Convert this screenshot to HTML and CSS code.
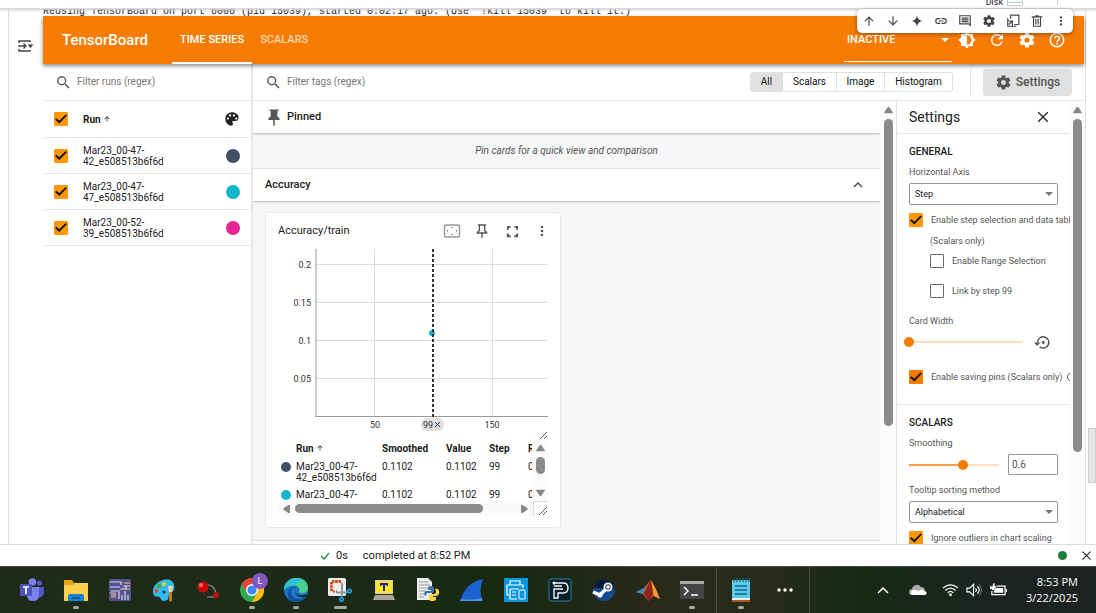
FILE: index.html
```html
<!DOCTYPE html>
<html lang="en">
<head>
<meta charset="utf-8">
<meta name="viewport" content="width=device-width, initial-scale=1">
<title>TensorBoard</title>
<link rel="stylesheet" href="styles.css">
</head>
<body>
<svg class="defs" aria-hidden="true">
  <symbol id="i-search" viewBox="0 0 24 24"><path d="M15.5 14h-.8l-.3-.3A6.5 6.5 0 1 0 13.700 14.400l.3.3v.8l5 5 1.500-1.500zm-6 0a4.500 4.500 0 1 1 0-9 4.500 4.500 0 0 1 0 9z"/></symbol>
  <symbol id="i-gear" viewBox="0 0 24 24"><path d="M19.430 12.980c.04-.32.07-.64.07-.98s-.03-.66-.07-.98l2.110-1.650c.19-.15.24-.42.12-.64l-2-3.460c-.12-.22-.39-.3-.61-.22l-2.490 1c-.52-.4-1.080-.73-1.690-.98l-.38-2.650A.49.49 0 0 0 14 2h-4c-.25 0-.46.18-.49.42l-.38 2.650c-.61.25-1.170.59-1.690.98l-2.490-1c-.23-.09-.49 0-.61.22l-2 3.460c-.13.22-.07.49.12.64l2.110 1.650c-.04.32-.07.65-.07.98s.03.66.07.98l-2.110 1.650c-.19.15-.24.42-.12.64l2 3.460c.12.22.39.3.61.22l2.490-1c.52.4 1.080.73 1.690.98l.38 2.650c.03.24.24.42.49.42h4c.25 0 .46-.18.49-.42l.38-2.650c.61-.25 1.170-.59 1.690-.98l2.490 1c.23.09.49 0 .61-.22l2-3.460c.12-.22.07-.49-.12-.64l-2.110-1.650zM12 15.500a3.500 3.500 0 1 1 0-7 3.500 3.500 0 0 1 0 7z"/></symbol>
  <symbol id="i-more" viewBox="0 0 24 24"><path d="M12 8a2 2 0 1 0 0-4 2 2 0 0 0 0 4zm0 2a2 2 0 1 0 0 4 2 2 0 0 0 0-4zm0 6a2 2 0 1 0 0 4 2 2 0 0 0 0-4z"/></symbol>
  <symbol id="i-sort" viewBox="0 0 24 24"><path d="M4 12l1.400 1.400L11 7.800V20h2V7.800l5.600 5.600L20 12l-8-8z"/></symbol>
  <symbol id="i-close" viewBox="0 0 24 24"><path d="M19 6.200L17.800 5 12 10.800 6.200 5 5 6.200l5.800 5.800L5 17.800 6.200 19l5.800-5.800 5.800 5.800 1.200-1.200-5.800-5.800z"/></symbol>
  <symbol id="i-drop" viewBox="0 0 10 5"><path d="M0 0h10L5 5z"/></symbol>
  <symbol id="i-up" viewBox="0 0 10 8"><path d="M4 1Q5 0 6 1L10 7Q10 8 9 8H1Q0 8 0 7z"/></symbol>
  <symbol id="i-grip" viewBox="0 0 8 8"><path d="M0 8L8 0M4 8L8 4" fill="none" stroke="#555"/></symbol>
</svg>

<header class="topstrip"><span class="disk">Disk</span><span class="diskbar"></span><span class="topsep"></span></header>

<div class="notebook">
  <div class="gutter">
    <svg width="18" height="14" viewBox="0 0 18 14" fill="none" stroke="#444" stroke-width="1.400"><path d="M2 4V2h11v1M2 10v2h11v-1M1 7h8M6.500 4.500L9 7 6.500 9.500"/><path d="M10.500 5.500h6l-3 3.500z" fill="#444" stroke="none"/></svg>
  </div>
  <div class="output">
    <pre class="log">Reusing TensorBoard on port 6006 (pid 15039), started 0:02:17 ago. (Use '!kill 15039' to kill it.)</pre>

    <div class="celltools">
      <button aria-label="Move up"><svg viewBox="0 0 24 24"><use href="#i-sort"/></svg></button>
      <button aria-label="Move down"><svg viewBox="0 0 24 24"><path d="M20 12l-1.400-1.400L13 16.200V4h-2v12.200l-5.600-5.600L4 12l8 8z"/></svg></button>
      <button aria-label="Assist"><svg viewBox="0 0 24 24"><path d="M12 2q1 9 10 10-9 1-10 10-1-9-10-10 9-1 10-10z"/></svg></button>
      <button aria-label="Copy link"><svg viewBox="0 0 24 24"><path d="M11 17H7A5 5 0 0 1 7 7h4v2H7a3 3 0 0 0 0 6h4zM8 11h8v2H8zM13 7h4a5 5 0 0 1 0 10h-4v-2h4a3 3 0 0 0 0-6h-4z"/></svg></button>
      <button aria-label="Comment"><svg viewBox="0 0 24 24"><path fill-rule="evenodd" d="M2 2h20v20l-4-4H2zM4 4v12h15l1 1V4zM6 6h12v2H6zm0 3h12v2H6zm0 3h12v2H6z"/></svg></button>
      <button aria-label="Cell settings"><svg viewBox="0 0 24 24"><use href="#i-gear"/></svg></button>
      <button aria-label="Mirror cell"><svg viewBox="0 0 24 24" fill="none" stroke="#444" stroke-width="2"><path d="M8 8V2h14v16h-8M3 7v14h15M3 12h8v8M11 12l-6 6"/></svg></button>
      <button aria-label="Delete"><svg viewBox="0 0 24 24" fill="none" stroke="#444" stroke-width="2"><path d="M6 5v16h12V5M3 5h18M9 3h6M10 8v10M14 8v10"/></svg></button>
      <button aria-label="More"><svg viewBox="0 0 24 24"><use href="#i-more"/></svg></button>
    </div>

    <div class="appbar">
      <h1>TensorBoard</h1>
      <nav><a class="active" href="#time">TIME SERIES</a><a href="#scalars">SCALARS</a></nav>
      <div class="inactive"><label class="pick"><select aria-label="Plugins"><option>INACTIVE</option></select><svg class="caret" viewBox="0 0 10 5"><use href="#i-drop"/></svg></label></div>
      <div class="appicons">
        <button aria-label="Theme"><svg viewBox="0 0 24 24"><path fill-rule="evenodd" d="M20 15.300L23.300 12 20 8.700V4h-4.700L12 .7 8.700 4H4v4.700L.7 12 4 15.300V20h4.700l3.300 3.300 3.300-3.300H20zM12 18V6a6 6 0 0 1 0 12z"/></svg></button>
        <button aria-label="Reload"><svg viewBox="0 0 24 24"><path d="M17.650 6.350A8 8 0 1 0 19.730 14h-2.080A6 6 0 1 1 12 6c1.660 0 3.140.69 4.220 1.780L13 11h7V4z"/></svg></button>
        <button aria-label="Preferences"><svg viewBox="0 0 24 24"><use href="#i-gear"/></svg></button>
        <button aria-label="Help"><svg viewBox="0 0 24 24"><path fill-rule="evenodd" d="M11 18h2v-2h-2zM12 2a10 10 0 1 0 0 20 10 10 0 0 0 0-20zm0 18a8 8 0 1 1 0-16 8 8 0 0 1 0 16zM12 6a4 4 0 0 0-4 4h2a2 2 0 1 1 4 0c0 2-3 1.750-3 5h2c0-2.250 3-2.500 3-5a4 4 0 0 0-4-4z"/></svg></button>
      </div>
    </div>

    <div class="board">
      <aside class="runs">
        <label class="filter"><svg viewBox="0 0 24 24"><use href="#i-search"/></svg><input type="text" placeholder="Filter runs (regex)"></label>
        <div class="run head"><input type="checkbox" class="check" checked aria-label="All runs"><b>Run <svg class="sort" viewBox="0 0 24 24"><use href="#i-sort"/></svg></b>
          <svg class="palette" viewBox="0 0 24 24"><path fill-rule="evenodd" d="M12 2C6 2 2 6.500 2 12s4.500 10 9 10c1.500 0 2.500-1 2.500-2.500 0-1.300-1-1.500-1-2.700 0-1 .8-1.800 2-1.800H17c3 0 5-2 5-5 0-4.500-4.500-8-10-8zM6 13a1.700 1.700 0 1 1 0-3.400A1.700 1.700 0 0 1 6 13zm3-4.500A1.700 1.700 0 1 1 9 5a1.700 1.700 0 0 1 0 3.500zm6 0A1.700 1.700 0 1 1 15 5a1.700 1.700 0 0 1 0 3.500zm3.500 4.500a1.700 1.700 0 1 1 0-3.400 1.700 1.700 0 0 1 0 3.400z"/></svg></div>
        <div class="run"><input type="checkbox" class="check" id="r1" checked><label for="r1">Mar23_00-47-<br>42_e508513b6f6d</label><i class="dot navy"></i></div>
        <div class="run"><input type="checkbox" class="check" id="r2" checked><label for="r2">Mar23_00-47-<br>47_e508513b6f6d</label><i class="dot teal"></i></div>
        <div class="run"><input type="checkbox" class="check" id="r3" checked><label for="r3">Mar23_00-52-<br>39_e508513b6f6d</label><i class="dot pink"></i></div>
      </aside>

      <section class="main">
        <div class="toolbar">
          <label class="filter"><svg viewBox="0 0 24 24"><use href="#i-search"/></svg><input type="text" placeholder="Filter tags (regex)"></label>
          <div class="toggles"><button class="on">All</button><button>Scalars</button><button>Image</button><button>Histogram</button></div>
          <div class="setwrap"><button class="setbtn"><svg viewBox="0 0 24 24"><use href="#i-gear"/></svg>Settings</button></div>
        </div>
        <div class="split">
          <div class="cards">
            <div class="grouphead"><svg class="pin" viewBox="0 0 24 24"><path d="M6 2h12v2h-1.500v7l3 3v2H13v7l-1 1-1-1v-7H4.500v-2l3-3V4H6z"/></svg><h2>Pinned</h2></div>
            <p class="pinhint">Pin cards for a quick view and comparison</p>
            <div class="grouphead acc"><h2>Accuracy</h2><button aria-label="Collapse"><svg viewBox="0 0 12 8"><path d="M2 6l4-4 4 4" fill="none" stroke="#444" stroke-width="1.300"/></svg></button></div>
            <div class="groupbody">
              <article class="card">
                <div class="cardhead"><h3>Accuracy/train</h3>
                  <button aria-label="Fit domain"><svg class="i18" viewBox="0 0 18 16" fill="none" stroke="#999"><rect x="1.500" y="2" width="15" height="12" rx="1" stroke-width="1.500"/><path d="M8 4.500h2M8 11.500h2M4.500 7v2M13.500 7v2"/></svg></button>
                  <button aria-label="Pin card"><svg class="i18" viewBox="0 0 24 24"><path fill-rule="evenodd" d="M6 2h12v2h-1v7l3 3v2h-7v6l-1 1-1-1v-6H4v-2l3-3V4H6zM9 4v8l-2 2h10l-2-2V4z"/></svg></button>
                  <button aria-label="Full size"><svg viewBox="0 0 24 24"><path d="M3 3h6v3H6v3H3zM15 3h6v6h-3V6h-3zM3 15h3v3h3v3H3zM18 15h3v6h-6v-3h3z"/></svg></button>
                  <button aria-label="More options"><svg class="i18" viewBox="0 0 24 24"><use href="#i-more"/></svg></button>
                </div>
                <svg class="chart" viewBox="0 0 270 191" role="img" aria-label="Accuracy/train chart">
                  <g fill="none" stroke="#dcdcdc" stroke-width="1"><path d="M38 15.500H270M38 53.500H270M38 91.500H270M38 129.500H270M96.500 0V167M214.500 0V167"/></g>
                  <path d="M38 0V168M37 167.500H270" stroke="#9a9a9a" fill="none" stroke-width="1"/>
                  <circle cx="154" cy="84" r="3" fill="#12b5cb"/>
                  <path d="M155 0V168" stroke="#333" stroke-width="2" stroke-dasharray="3 2" fill="none"/>
                  <g class="ylab"><text x="33" y="19">0.2</text><text x="33" y="57">0.15</text><text x="33" y="95">0.1</text><text x="33" y="133">0.05</text></g>
                  <rect x="143" y="169" width="23" height="13" rx="6" fill="#e0e0e0"/>
                  <g class="xlab"><text x="97" y="179">50</text><text x="150" y="179">99</text><text x="214" y="179">150</text></g>
                  <path d="M157 173l5 5M162 173l-5 5" stroke="#333" fill="none"/>
                  <path d="M262 190L269 183M266 190L269 187" stroke="#555" fill="none"/>
                </svg>
                <div class="datatable">
                  <div class="datarow">
                    <div class="tablewrap">
                      <table>
                        <thead><tr><th></th><th>Run <svg class="sort" viewBox="0 0 24 24"><use href="#i-sort"/></svg></th><th>Smoothed</th><th>Value</th><th>Step</th><th>Relative</th></tr></thead>
                        <tbody>
                          <tr><td><i class="dot navy"></i></td><td>Mar23_00-47-<br>42_e508513b6f6d</td><td>0.1102</td><td>0.1102</td><td>99</td><td>0</td></tr>
                          <tr><td><i class="dot teal"></i></td><td>Mar23_00-47-</td><td>0.1102</td><td>0.1102</td><td>99</td><td>0</td></tr>
                        </tbody>
                      </table>
                    </div>
                    <div class="vbar small"><svg viewBox="0 0 10 8"><use href="#i-up"/></svg><i></i><svg class="flip" viewBox="0 0 10 8"><use href="#i-up"/></svg></div>
                  </div>
                  <div class="hbar"><svg class="left" viewBox="0 0 10 8"><use href="#i-up"/></svg><span><i></i></span><svg class="right" viewBox="0 0 10 8"><use href="#i-up"/></svg><b><svg viewBox="0 0 8 8"><use href="#i-grip"/></svg></b></div>
                </div>
              </article>
            </div>
            <div class="nextgroup"></div>
          </div>
          <div class="vbar a"><svg viewBox="0 0 10 8"><use href="#i-up"/></svg><i></i></div>
          <aside class="settings">
            <div class="sethead"><h2>Settings</h2><button aria-label="Close settings"><svg viewBox="0 0 24 24"><use href="#i-close"/></svg></button></div>
            <div class="sec">
              <h3>GENERAL</h3>
              <label class="cap" for="axis">Horizontal Axis</label>
              <div class="pick box"><select id="axis"><option>Step</option></select><svg class="caret" viewBox="0 0 10 5"><use href="#i-drop"/></svg></div>
              <label class="opt first"><input type="checkbox" class="check" checked><span>Enable step selection and data table</span></label>
              <p class="sub">(Scalars only)</p>
              <label class="opt in range"><input type="checkbox" class="check"><span>Enable Range Selection</span></label>
              <label class="opt in link"><input type="checkbox" class="check"><span>Link by step 99</span></label>
              <label class="cap" for="cw">Card Width</label>
              <div class="sliderrow"><input id="cw" class="wide" type="range" min="0" max="100" value="0"><button aria-label="Reset card width"><svg viewBox="0 0 24 24"><path d="M5 12a8 8 0 1 1 3 6.200" fill="none" stroke="#555" stroke-width="2"/><path d="M0 12h9l-4.500 5z"/><circle cx="13" cy="12" r="2"/></svg></button></div>
              <label class="opt pins"><input type="checkbox" class="check deep" checked><span>Enable saving pins (Scalars only)</span><svg class="info" viewBox="0 0 24 24"><circle cx="12" cy="12" r="9" fill="none" stroke="#555" stroke-width="2"/><path d="M11 10h2v7h-2zM11 7h2v2h-2z"/></svg></label>
            </div>
            <div class="sec second">
              <h3>SCALARS</h3>
              <label class="cap" for="sm">Smoothing</label>
              <div class="smooth"><input id="sm" class="fill" type="range" min="0" max="1" step="0.1" value="0.6"><input type="text" value="0.6" aria-label="Smoothing value"></div>
              <label class="cap" for="tt">Tooltip sorting method</label>
              <div class="pick box"><select id="tt"><option>Alphabetical</option></select><svg class="caret" viewBox="0 0 10 5"><use href="#i-drop"/></svg></div>
              <label class="opt last"><input type="checkbox" class="check" checked><span>Ignore outliers in chart scaling</span></label>
            </div>
          </aside>
          <div class="vbar b"><svg viewBox="0 0 10 8"><use href="#i-up"/></svg><i></i></div>
        </div>
      </section>
    </div>
  </div>
  <div class="pagebar"><i></i></div>
</div>

<footer class="status">
  <svg class="ok" viewBox="0 0 10 8"><path d="M1 4l3 3 5-6" fill="none" stroke="#1e8e3e" stroke-width="1.200"/></svg><span>0s</span><span class="done">completed at 8:52 PM</span><i class="live"></i><button aria-label="Dismiss"><svg viewBox="0 0 24 24"><use href="#i-close"/></svg></button>
</footer>

<div class="taskbar">
  <div class="apps">
    <button aria-label="Teams"><svg viewBox="0 0 24 24"><circle cx="19.500" cy="5" r="2.600" fill="#5059c9"/><path d="M16 9h8v6q-1 5-6 4z" fill="#5059c9"/><circle cx="12.500" cy="4" r="3.800" fill="#7b83eb"/><path d="M7 9h12v8q0 6-6 6t-6-6z" fill="#7b83eb"/><rect x="0" y="6" width="12" height="12" rx="1" fill="#4b53bc"/><path d="M3 9h6M6 9v7" stroke="#fff" stroke-width="1.700" fill="none"/></svg></button>
    <button class="open" aria-label="File Explorer"><svg viewBox="0 0 24 24"><path d="M0 3q0-1 1-1h7l2 3h13q1 0 1 1v16q0 1-1 1H1q-1 0-1-1z" fill="#e8a317"/><path d="M0 7h9l2-2h12q1 0 1 1v16q0 1-1 1H1q-1 0-1-1z" fill="#ffd04e"/><path d="M4 23v-5q0-2 2-2h12q2 0 2 2v5z" fill="#1683cf"/><path d="M8 19h8v2H8z" fill="#0a5ca0"/></svg></button>
    <button aria-label="Control board"><svg viewBox="0 0 24 24"><rect x="1" y="1" width="22" height="22" rx="2" fill="#55528f"/><path d="M2 4h11v3M2 9h10M15 8h7M3 13h9M3 17h5M11 14v7M14 17v5M17 13v9M20 17v5M12 11h6V8" stroke="#ddd6ef" stroke-width="1.200" fill="none"/><path d="M16 5h6M16 11h6M2 15h6M3 19h5" stroke="#edbd83" stroke-width="1.200"/></svg></button>
    <button aria-label="Paint"><svg viewBox="0 0 24 24"><path d="M11 2c7-3 13 3 11 9-1 4-4 3-5 5-1 3 1 7-6 7-2 0-2-3-4-4s-6 1-6-6C1 8 5 4 11 2z" fill="#31bced"/><circle cx="12" cy="6" r="2" fill="#f5cf33"/><circle cx="7" cy="8" r="2.200" fill="#49a638"/><circle cx="4.500" cy="13" r="2" fill="#e65025"/><circle cx="12" cy="14" r="1.600" fill="#11455c"/><path d="M16 8h5l-1 6h-3z" fill="#ead4ac"/><path d="M17 14h3v9q-2 1-3 0z" fill="#c67824"/></svg></button>
    <button aria-label="Molecules"><svg viewBox="0 0 24 24"><path d="M8 7q10-2 12 9M11 19h8" fill="none" stroke="#777" stroke-width="1.600"/><circle cx="7" cy="9" r="5.500" fill="#ca0b0b"/><circle cx="5" cy="7" r="2" fill="#ff6b62"/><circle cx="20" cy="17" r="3" fill="#bb1212"/></svg></button>
    <button class="open" aria-label="Chrome"><svg viewBox="0 0 24 24"><circle cx="12" cy="12" r="12" fill="#34a853"/><path d="M12 6h10.400A12 12 0 0 1 12 24l5-9z" fill="#fbbc05"/><path d="M1.600 6A12 12 0 0 1 22.400 6H12l-5 8z" fill="#ea4335"/><circle cx="12" cy="12" r="6" fill="#fff"/><circle cx="12" cy="12" r="4.600" fill="#4285f4"/></svg><em>L</em></button>
    <button class="open" aria-label="Edge"><svg viewBox="0 0 24 24"><circle cx="12" cy="12" r="12" fill="#1679c8"/><path d="M0 12C0-4 24-4 24 10c0 6-8 6-9 4 3-6-8-10-15-2z" fill="#48cf91"/><path d="M0 12C0 3 10-2 17 1c-1 3-5 4-6 6-5-1-9 1-11 5z" fill="#2bbfe0"/><path d="M8 11c-4 5 2 14 14 8-3 4-7 5-10 5C6 24 3 19 4 15c0-4 6-7 9-5-3 0-5 1-5 1z" fill="#114f9c"/><path d="M13 10c-4 4 1 10 10 6l-1 3c-9 2-13-5-9-9z" fill="#1c2a19"/></svg></button>
    <button class="open wide" aria-label="Snipping Tool"><svg viewBox="0 0 24 24"><rect x="0" y="0" width="18" height="18" rx="1.500" fill="#eee"/><path d="M3.500 13V3.500H13" fill="none" stroke="#dc4215" stroke-width="2.800" stroke-dasharray="2.500 .8"/><path d="M5 13.500h4" stroke="#dc4215" stroke-width="2" stroke-dasharray="2 1"/><path d="M14 5v12M8 14.500h11" stroke="#8e979c" stroke-width="2"/><path d="M18 14.500l2-1M14 17l-.5 3" stroke="#24a5e5" stroke-width="1.500"/><circle cx="21.500" cy="13" r="1.800" fill="none" stroke="#24a5e5" stroke-width="1.500"/><circle cx="13.500" cy="21.500" r="1.800" fill="none" stroke="#24a5e5" stroke-width="1.500"/></svg></button>
    <button aria-label="Terminal T"><svg viewBox="0 0 24 24"><path d="M3 2h18v14H3z" fill="#ccc"/><path d="M4 3h16v12H4z" fill="#ffe51c"/><path d="M8 5h8v3h-1l-1-1h-1v6h-2V7h-1L9 8H8z" fill="#1822b8"/><path d="M3 17h18l2 5H1z" fill="#aaa69b"/></svg></button>
    <button aria-label="Python"><svg viewBox="0 0 24 24"><path d="M1 0h11l4 4v18H1z" fill="#eee"/><path d="M3 4h10M3 7h11M3 10h9M3 13h7M3 16h5M3 19h5" stroke="#999"/><path d="M12 12v-2q0-2 3-2t3 2v3q0 2-2 2h-4q-2 0-2 3H9q-2-4 1-5h5v-1z" fill="#3974a8"/><path d="M19 11q5-1 4 5-1 2-3 2h-3v1h3v2q0 2-4 2-3 0-3-2v-3q0-2 2-2h3q2 0 2-3z" fill="#ffd348"/></svg></button>
    <button aria-label="Wireshark"><svg viewBox="0 0 24 24"><path d="M0 23Q6 4 23 1q-5 12 0 22z" fill="#1b62cf"/><path d="M2 21q9 2 20-1v3H0z" fill="#4e97ee"/></svg></button>
    <button aria-label="Printer"><svg viewBox="0 0 24 24"><path d="M0 0h24v24H0z" fill="#0796df"/><path d="M6 7V3h10v4M6 17H3V7h16v3M6 11h9M6 11v10h7M8 14h4M8 17h4" fill="none" stroke="#fff" stroke-width="1.200"/><rect x="15" y="12" width="6" height="9" rx="1" fill="#0796df" stroke="#fff"/></svg></button>
    <button aria-label="Packet Tracer"><svg viewBox="0 0 24 24"><rect x="1" y="1" width="22" height="22" rx="2" fill="#091d28" stroke="#1889b5"/><path d="M6 5h9q5 0 5 5t-5 5H10v5H6v-9h9M6 8h8" fill="none" stroke="#eef7fa" stroke-width="1.400"/><circle cx="6" cy="5" r="1.500" fill="#fff"/></svg></button>
    <button aria-label="Steam"><svg viewBox="0 0 24 24"><circle cx="12" cy="12" r="11" fill="#144c8d"/><path d="M1 10Q4 0 14 1q8 2 9 10z" fill="#0b1b36"/><path d="M1 14l7 3 8-8" stroke="#fff" stroke-width="3.500" fill="none"/><circle cx="16" cy="9" r="4.500" fill="#fff"/><circle cx="16" cy="9" r="2.700" fill="#173b67"/><circle cx="16" cy="9" r="1.800" fill="#fff"/><circle cx="8" cy="17" r="2.500" fill="#fff"/></svg></button>
    <button aria-label="MATLAB"><svg viewBox="0 0 24 24"><path d="M0 14l8-4 7-8q3 5 9 19l-6-3-6 5-5-7z" fill="#d15b24"/><path d="M0 14l8-4 3-4-4 10z" fill="#348fbc"/><path d="M15 2q3 8 1 17l-4 4-4-8z" fill="#8f251b"/><path d="M15 2q5 8 9 19l-6-3z" fill="#f29a32"/></svg></button>
    <button class="open" aria-label="Command prompt"><svg viewBox="0 0 24 24"><path d="M0 3h24v18H0z" fill="#454545"/><path d="M0 3h24v3H0z" fill="#aaa"/><path d="M4 9l4 4-4 4M11 17h7" fill="none" stroke="#fff" stroke-width="1.500"/></svg></button>
  </div>
  <div class="apps extra">
    <button class="open" aria-label="Notepad"><svg viewBox="0 0 24 24"><path d="M3 2h18v20H3z" fill="#5bc8ea"/><path d="M5 0v4M8 0v4M11 0v4M14 0v4M17 0v4M20 0v4" stroke="#146383" stroke-width="1.200"/><path d="M6 8h12M6 12h12M6 16h12" stroke="#116a94" stroke-width="1.700"/><path d="M3 20h18v2H3z" fill="#eee"/><path d="M3 22h18v2H3z" fill="#a85721"/></svg></button>
    <button aria-label="More apps"><svg viewBox="0 0 24 24"><circle cx="6" cy="12" r="1.700"/><circle cx="12" cy="12" r="1.700"/><circle cx="18" cy="12" r="1.700"/></svg></button>
  </div>
  <div class="tray">
    <svg class="chev" viewBox="0 0 12 8"><path d="M1 7l5-5 5 5" fill="none" stroke="#fff" stroke-width="1.500"/></svg>
    <svg class="cloud" viewBox="0 0 18 12"><path d="M3 11a3 3 0 0 1 0-6 5 5 0 0 1 9-2 4 4 0 0 1 4 4z" fill="#aaa"/><path d="M3 11a3 3 0 0 1 1-5q3-1 5 1 4-3 6 0a2 2 0 0 1 1 4z" fill="#fff"/></svg>
    <svg class="wifi" viewBox="0 0 18 14"><path d="M1 5q8-7 16 0M3.500 7.500q5.500-5 11 0M6 10q3-3 6 0" fill="none" stroke="#fff" stroke-width="1.300"/><circle cx="9" cy="12" r="1.500" fill="#fff"/></svg>
    <svg class="vol" viewBox="0 0 18 14"><path d="M1 5h3l4-4v12L4 9H1zM10 5q2 2 0 4M12 3q4 4 0 8" fill="none" stroke="#fff" stroke-width="1.200"/><path d="M14 1q5 6 0 12" fill="none" stroke="#777"/></svg>
    <svg class="batt" viewBox="0 0 18 14"><path d="M7 3h9v9H2V8" fill="none" stroke="#fff" stroke-width="1.300"/><path d="M6 5h8v5H4V8zM17 6h1v3h-1zM3 0v3H0v3h2v1h2L7 3H5V0z" fill="#fff"/></svg>
    <div class="clock"><time>8:53 PM</time><time>3/22/2025</time></div>
  </div>
</div>
</body>
</html>
```
FILE: styles.css
```css
* { box-sizing: border-box; }
body {
  margin: 0;
  height: 100vh;
  display: flex;
  flex-direction: column;
  overflow: hidden;
  background: #fff;
  color: #212121;
  font: 10px/12px Roboto, sans-serif;
}
h1, h2, h3, p, pre { margin: 0; }
h2, h3 { font-weight: 500; }
button { border: 0; padding: 0; background: none; font: inherit; color: inherit; display: flex; align-items: center; justify-content: center; }
input, select { font: inherit; color: inherit; margin: 0; }
svg { flex: none; }
svg:not([fill]) { fill: currentColor; }
i { display: block; flex: none; }
.defs { display: none; }

/* notebook frame */
.topstrip {
  flex: none;
  height: 9px;
  display: flex;
  justify-content: flex-end;
  align-items: flex-end;
  gap: 4px;
  padding-right: 38px;
  overflow: hidden;
  border-bottom: 1px solid #dadada;
  box-shadow: 0 1px 3px #ccc;
  z-index: 1;
}
.disk { font-size: 9px; line-height: 12px; }
.diskbar { width: 16px; height: 7px; margin-bottom: 2px; border: 1px solid #ccc; border-top: 0; background: linear-gradient(#fff 3px, #a8dab5 3px 4px, #fff 4px); }
.topsep { width: 1px; height: 6px; margin: 0 0 3px 30px; background: #ccc; }
.notebook { flex: 1; min-height: 0; display: flex; }
.gutter { width: 35px; margin-left: 8px; padding: 30px 0 0 8px; border-left: 1px solid #dadce0; }
.output { flex: 1; min-width: 0; display: flex; flex-direction: column; position: relative; }
.log { flex: none; height: 7px; overflow: hidden; font: 10px/6px "Liberation Mono", monospace; }
.pagebar { width: 11px; border-left: 1px solid #e0e0e0; margin-left: 1px; padding-top: 419px; }
.pagebar i { height: 55px; margin-left: 2px; background: #e4e4e4; border: 1px solid #ccc; }
.celltools {
  position: absolute;
  top: 0;
  right: 11px;
  display: flex;
  padding: 0;
  height: 24px;
  border-radius: 5px;
  background: #fff;
  color: #444;
  box-shadow: 0 1px 4px #0006;
  z-index: 2;
}
.celltools button { width: 24px; }
.celltools svg { width: 14px; height: 14px; }

/* app bar */
.appbar { flex: none; height: 48px; display: flex; background: #f57c00; color: #fff; box-shadow: 0 2px 4px #0007; z-index: 1; padding-right: 12px; }
.appbar h1 { width: 129px; padding-left: 19px; font-size: 15px; line-height: 48px; font-weight: 500; }
.appbar nav { display: flex; flex: 1; }
.appbar a { padding: 0 8px; color: #ffffffb3; font-size: 11px; font-weight: 500; line-height: 47px; text-decoration: none; }
.appbar a.active { color: #fff; border-bottom: 2px solid #fff; }
.inactive { width: 108px; border-bottom: 1px solid #fff; margin-bottom: 2px; }
.pick { display: grid; align-items: center; }
.pick > * { grid-area: 1 / 1; }
.pick select { appearance: none; width: 100%; border: 0; background: none; border-radius: 0; padding: 0; }
.caret { width: 8px; height: 4px; justify-self: end; pointer-events: none; margin-right: 3px; }
.inactive select { height: 48px; padding-left: 3px; font-size: 11px; font-weight: 500; }
.appicons { display: flex; }
.appicons button { width: 30px; }
.appicons svg { width: 18px; height: 18px; }

/* runs */
.board { flex: 1; min-height: 0; display: flex; }
.runs { width: 210px; border-right: 2px solid #e6e6e6; }
.filter { display: flex; align-items: center; gap: 3px; height: 37px; padding-left: 12px; color: #555; }
.filter svg { width: 17px; height: 17px; }
.filter input { width: 120px; border: 0; outline: 0; background: none; }
.filter input::placeholder { color: #777; }
.runs .filter { border-bottom: 1px solid #e6e6e6; }
.run { display: flex; align-items: center; height: 36px; padding: 0 11px; border-bottom: 1px solid #e6e6e6; line-height: 11px; }
.run.head { height: 37px; }
.run label, .run b { flex: 1; margin-left: 15px; }
.run b, th { font-weight: 700; }
.sort { width: 8px; height: 8px; }
.palette { width: 16px; height: 16px; }
.dot { width: 14px; height: 14px; border-radius: 50%; }
.navy { background: #425066; }
.teal { background: #12b5cb; }
.pink { background: #e52592; }
.check { appearance: none; flex: none; width: 14px; height: 14px; border: 1px solid #666; border-radius: 1px; display: grid; place-items: center; }
.check:checked { background: #ff9800; border-color: #ff9800; }
.check.deep:checked { background: #f57c00; border-color: #f57c00; }
.check:checked::after { content: ""; width: 12px; height: 10px; background: #111; clip-path: polygon(0 54%, 12% 42%, 36% 68%, 88% 4%, 100% 16%, 36% 96%); }

/* tag toolbar */
.main { flex: 1; min-width: 0; display: flex; flex-direction: column; }
.toolbar { flex: none; display: flex; align-items: center; border-bottom: 1px solid #e6e6e6; height: 37px; padding-right: 12px; }
.toolbar .filter { flex: 1; }
.toggles { display: flex; border: 1px solid #e0e0e0; border-radius: 3px; height: 20px; }
.toggles button { padding: 0 11px; border-right: 1px solid #e0e0e0; color: #111; }
.toggles button:nth-child(2) { width: 54px; }
.toggles button:nth-child(3) { width: 48px; }
.toggles button:last-child { width: 67px; border: 0; }
.toggles .on { width: 32px; background: #e0e0e0; }
.setwrap { margin-left: 17px; padding-left: 12px; border-left: 1px solid #e0e0e0; }
.setbtn { gap: 4px; width: 89px; height: 27px; border-radius: 3px; background: #e0e0e0; color: #555; font-size: 12px; font-weight: 500; }
.setbtn svg { width: 17px; height: 17px; }

/* cards */
.split { flex: 1; min-height: 0; display: flex; }
.cards { flex: 1; min-width: 0; overflow: hidden; background: #f5f6f7; }
.grouphead { display: flex; align-items: center; gap: 4px; height: 32px; padding: 0 12px; background: #fff; box-shadow: 0 1px 2px #0004; }
.grouphead h2 { font-size: 11px; flex: 1; }
.pin { width: 18px; height: 18px; color: #555; }
.pinhint { padding: 12px 0 11px; text-align: center; font-style: italic; color: #555; border-bottom: 1px solid #e6e6e6; }
.grouphead.acc { padding-right: 16px; }
.acc svg { width: 12px; height: 8px; }
.groupbody { padding: 11px 12px 12px; }
.nextgroup { height: 10px; background: #fff; border-top: 1px solid #ddd; }
.card { width: 296px; padding: 7px 12px 11px; background: #fff; border: 1px solid #e8e8e8; border-radius: 3px; }
.cardhead { display: flex; align-items: center; height: 22px; margin-right: -9px; }
.cardhead h3 { flex: 1; font-size: 11px; font-weight: 400; }
.cardhead button { width: 30px; color: #555; }
.cardhead svg { width: 15px; height: 15px; }
.cardhead .i18 { width: 18px; height: 16px; }
.chart { display: block; width: 100%; margin-top: 7px; }
.chart text { font: 9px Roboto, sans-serif; fill: #333; }
.ylab { text-anchor: end; }
.xlab { text-anchor: middle; }
.datarow { display: flex; height: 61px; }
.tablewrap { flex: 1; min-width: 0; overflow: hidden; }
table { width: 320px; table-layout: fixed; border-collapse: collapse; line-height: 11px; }
th, td { padding: 0; text-align: left; vertical-align: top; white-space: nowrap; }
th { height: 21px; padding-top: 3px; }
td { height: 28px; }
th:nth-child(1) { width: 18px; }
th:nth-child(2) { width: 86px; }
th:nth-child(3) { width: 64px; }
th:nth-child(4) { width: 43px; }
th:nth-child(5) { width: 39px; }
td .dot { width: 10px; height: 10px; margin: 1px 0 0 3px; }
.hbar { display: flex; align-items: center; height: 15px; background: #fafafa; color: #888; }
.hbar svg { width: 9px; height: 8px; margin: 0 4px; }
.hbar .left { transform: rotate(-90deg); }
.hbar .right { transform: rotate(90deg); }
.hbar span { flex: 1; }
.hbar i { width: 85%; height: 9px; border-radius: 5px; background: #8b8b8b; }
.hbar b { width: 15px; height: 15px; display: grid; place-items: end; padding: 0 1px 1px 0; background: #fff; border: 1px solid #ddd; border-width: 1px 0 0 1px; }
.hbar b svg { width: 8px; height: 8px; margin: 0; }

/* scroll bars */
.vbar { display: flex; flex-direction: column; align-items: center; padding-top: 5px; width: 16px; background: #fcfcfc; color: #888; }
.vbar svg { width: 9px; height: 8px; }
.vbar i { width: 9px; height: 70%; margin-top: 5px; border-radius: 5px; background: #8b8b8b; }
.vbar.b { width: 14px; }
.vbar.b i { height: 76%; }
.vbar.small { padding-top: 4px; }
.vbar.small i { height: 17px; }
.flip { transform: rotate(180deg); margin-top: auto; margin-bottom: 4px; }

/* settings pane */
.settings { width: 174px; border-left: 1px solid #e0e0e0; overflow: hidden; color: #555; font-size: 9px; }
.sethead { display: flex; align-items: center; justify-content: space-between; height: 33px; padding: 0 18px 0 12px; border-bottom: 1px solid #e6e6e6; color: #212121; }
.sethead h2 { font-size: 14px; font-weight: 400; line-height: 16px; }
.sethead svg { width: 18px; height: 18px; }
.sec { padding: 12px 12px 0; }
.sec h3 { font-size: 10px; color: #212121; }
.cap { display: block; margin-top: 8px; }
.box { margin-top: 5px; }
.box select { height: 22px; padding-left: 5px; border: 1px solid #8e98a3; border-radius: 2px; color: #212121; }
.box .caret { margin-right: 5px; color: #777; }
.opt { display: flex; align-items: center; gap: 8px; height: 14px; white-space: nowrap; }
.opt.first { margin-top: 8px; }
.sub { margin: 8px 0 0 21px; }
.opt.in { margin-left: 21px; }
.range { margin-top: 7px; }
.link { margin: 16px 0 17px; }
.sec input[type="range"] { appearance: none; height: 10px; margin-left: -5px; background: linear-gradient(#ffddb8, #ffddb8) center / calc(100% - 10px) 2px no-repeat; }
.sec input.fill { width: 100px; background-image: linear-gradient(90deg, #fa9f45 60%, #ffddb8 60%); }
.sec input.wide { width: 124px; }
.sec input[type="range"]::-webkit-slider-thumb { appearance: none; width: 10px; height: 10px; border: 0; border-radius: 50%; background: #f57c00; }
.sliderrow { display: flex; align-items: center; justify-content: space-between; height: 18px; margin-top: 6px; padding-right: 7px; }
.sliderrow svg { width: 17px; height: 17px; }
.pins { margin: 19px 0 20px; }
.pins .info { width: 12px; height: 12px; margin-left: -4px; }
.second { border-top: 1px solid #e6e6e6; }
.smooth { display: flex; align-items: center; justify-content: space-between; margin-top: 5px; }
.smooth input[type="text"] { width: 50px; height: 21px; padding: 0 3px; border: 1px solid #8e98a3; font-size: 10px; border-radius: 1px; }
.smooth + .cap { margin-top: 9px; }
.last { margin-top: 8px; }

/* notebook status */
.status { flex: none; display: flex; align-items: center; height: 22px; padding: 0 2px 0 320px; border-top: 1px solid #dadada; background: #fff; font-size: 11px; }
.ok { width: 10px; height: 8px; margin-right: 6px; }
.done { flex: 1; margin-left: 15px; }
.live { width: 9px; height: 9px; border-radius: 50%; background: #188038; margin-right: 12px; }
.status button svg { width: 15px; height: 15px; }

/* taskbar */
.taskbar { flex: none; display: flex; height: 47px; color: #fff; border-top: 1px solid #454b40; background: linear-gradient(90deg, #202b19, #1c2b19 30%, #17290f 45%, #28291a 58%, #292b18 70%, #162b15 78%, #1c2321 90%, #1e2222); }
.apps { display: flex; padding-left: 10px; }
.apps.extra { margin-left: 2px; padding: 0 2px; border: 1px solid #4a4e42; border-width: 0 1px; }
.apps button { width: 44px; position: relative; }
.apps svg { width: 24px; height: 24px; }
.apps .open::after { content: ""; position: absolute; bottom: 4px; width: 6px; height: 3px; border-radius: 2px; background: #a4aaa0; }
.apps .open.wide::after { width: 13px; }
.apps em { position: absolute; top: 6px; right: 6px; width: 16px; height: 16px; border-radius: 50%; background: #7e57c2; font: 9px/16px Roboto, sans-serif; }
.tray { flex: 1; display: flex; align-items: center; justify-content: flex-end; padding-right: 18px; }
.chev { width: 12px; height: 8px; margin-right: 20px; }
.cloud { width: 18px; height: 12px; margin-right: 15px; }
.wifi, .vol, .batt { width: 17px; height: 14px; margin-right: 7px; }
.clock { display: grid; justify-items: end; width: 64px; font: 11px/16px "Open Sans", sans-serif; }
```
